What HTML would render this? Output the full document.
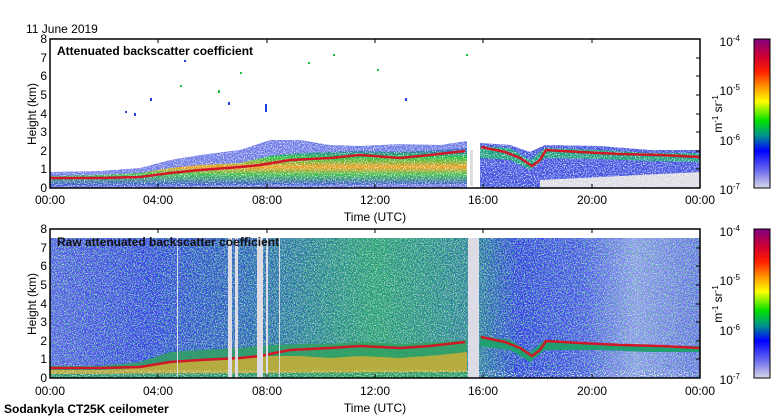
<!DOCTYPE html>
<html><head><meta charset="utf-8"><style>
html,body{margin:0;padding:0;background:#fff;}
svg{display:block;font-family:"Liberation Sans",sans-serif;}
</style></head><body>
<svg width="780" height="420" viewBox="0 0 780 420" xmlns="http://www.w3.org/2000/svg">
<defs>
<filter id="spk" x="0" y="0" width="100%" height="100%">
<feTurbulence type="fractalNoise" baseFrequency="0.9" numOctaves="1" seed="3"/>
<feColorMatrix type="matrix" values="0 0 0 0 1  0 0 0 0 1  0 0 0 0 1  0 0 0 9 -4.8"/>
</filter>
<filter id="spk2" x="0" y="0" width="100%" height="100%">
<feTurbulence type="fractalNoise" baseFrequency="0.7" numOctaves="1" seed="8"/>
<feColorMatrix type="matrix" values="0 0 0 0 0.1  0 0 0 0 0.8  0 0 0 0 0.2  0 0 0 9 -4.9"/>
</filter>
<linearGradient id="lowbg" x1="0" x2="1" y1="0" y2="0">
<stop offset="0" stop-color="#5560e6"/>
<stop offset="0.15" stop-color="#3848e4"/>
<stop offset="0.3" stop-color="#2f62c0"/>
<stop offset="0.5" stop-color="#2c9a7a"/>
<stop offset="0.65" stop-color="#2f7fa0"/>
<stop offset="0.72" stop-color="#3444e2"/>
<stop offset="0.82" stop-color="#4c5ae8"/>
<stop offset="0.9" stop-color="#8c96ee"/>
<stop offset="1" stop-color="#6470e6"/>
</linearGradient>
<linearGradient id="cb" x1="0" x2="0" y1="0" y2="1">
<stop offset="0" stop-color="#800080"/>
<stop offset="0.12" stop-color="#d00030"/>
<stop offset="0.22" stop-color="#ff2000"/>
<stop offset="0.33" stop-color="#ffa000"/>
<stop offset="0.42" stop-color="#ffff00"/>
<stop offset="0.55" stop-color="#00e000"/>
<stop offset="0.65" stop-color="#009090"/>
<stop offset="0.75" stop-color="#0000ff"/>
<stop offset="0.87" stop-color="#6060f0"/>
<stop offset="1" stop-color="#d8d8e8"/>
</linearGradient>
<linearGradient id="upband" x1="0" x2="0" y1="0" y2="1">
<stop offset="0" stop-color="#3050e0"/>
<stop offset="0.25" stop-color="#20c040"/>
<stop offset="0.5" stop-color="#f0a020"/>
<stop offset="0.7" stop-color="#40c050"/>
<stop offset="1" stop-color="#4050e0"/>
</linearGradient>
</defs>

<text x="26" y="33" font-size="12">11 June 2019</text>

<!-- ===== upper panel ===== -->
<g>
<polygon points="50,172 100,171 140,168 170,160 200,155 240,150 270,140 300,140 330,145 360,146 400,144 440,145 467,141 467,188 50,188" fill="#5060e0" opacity="0.8"/>
<polygon points="50,176 100,175 140,173 170,168 200,165 240,163 270,156 300,153 330,152 360,151 400,152 440,150 467,148 467,184 50,186" fill="url(#upband)"/>
<polygon points="480,143 510,145 530,152 545,145 600,146 650,150 700,150 700,188 480,188" fill="#4a5ae0"/>
<polygon points="480,146 510,148 530,160 545,148 600,150 650,153 700,153 700,162 650,161 600,159 545,158 530,170 510,160 480,158" fill="#20a080"/>
<polygon points="540,180 620,176 700,172 700,188 540,188" fill="#dcdce4"/>
<rect x="50" y="140" width="650" height="48" filter="url(#spk)" opacity="0.75"/>
<polyline fill="none" stroke="#d01828" stroke-width="2.5" points="50,178 100,178 140,177 170,173 200,170 240,167 260,165 290,160 330,158 360,155 400,158 430,155 465,151"/>
<polyline fill="none" stroke="#d01828" stroke-width="2.5" points="481,147 505,152 520,158 532,166 540,160 546,150 580,152 620,154 660,155 700,157"/>
<rect x="467" y="140" width="12" height="48" fill="#fff"/>
<rect x="470" y="150" width="3" height="36" fill="#ddd"/>
<g fill="#20c040"><rect x="333" y="54" width="2" height="2"/><rect x="308" y="62" width="2" height="2"/><rect x="180" y="85" width="2" height="2"/><rect x="240" y="72" width="2" height="2"/><rect x="377" y="69" width="2" height="2"/><rect x="466" y="54" width="2" height="2"/><rect x="218" y="90" width="2" height="3"/></g>
<g fill="#2040e0"><rect x="150" y="98" width="2" height="3"/><rect x="184" y="60" width="2" height="2"/><rect x="265" y="104" width="2" height="8"/><rect x="228" y="102" width="2" height="3"/><rect x="134" y="113" width="2" height="3"/><rect x="125" y="111" width="2" height="2"/><rect x="405" y="98" width="2" height="3"/></g>
<rect x="50" y="39" width="650" height="149" fill="none" stroke="#000" stroke-width="1.5"/>
<text x="57" y="55" font-size="12" font-weight="bold">Attenuated backscatter coefficient</text>
</g>

<!-- ===== lower panel ===== -->
<g>
<rect x="50" y="238" width="650" height="140" fill="url(#lowbg)"/>
<rect x="50" y="238" width="650" height="140" filter="url(#spk)" opacity="0.6"/>
<rect x="50" y="238" width="650" height="140" filter="url(#spk2)" opacity="0.6"/>
<polygon points="50,366 100,366 140,362 170,352 200,350 240,348 270,345 300,344 330,344 360,342 400,344 440,342 467,340 467,378 50,378" fill="#30a060" opacity="0.85"/>
<polygon points="50,370 100,370 140,368 170,362 200,360 240,358 270,356 300,356 330,358 360,356 400,358 440,355 467,352 467,372 50,374" fill="#e0b030" opacity="0.75"/>
<rect x="50" y="370" width="650" height="8" filter="url(#spk)" opacity="0.6"/>
<polygon points="480,336 510,340 530,352 545,340 600,344 650,346 700,346 700,352 650,352 600,350 545,350 530,362 510,350 480,346" fill="#20a070"/>
<polyline fill="none" stroke="#d01828" stroke-width="2.5" points="50,368 100,368 140,367 170,362 200,360 240,358 260,356 290,350 330,348 360,346 400,348 430,346 465,342"/>
<polyline fill="none" stroke="#d01828" stroke-width="2.5" points="481,337 505,342 520,348 532,356 540,350 546,341 580,343 620,345 660,346 700,348"/>
<g fill="#dcdce6">
<rect x="228" y="238" width="4" height="140"/><rect x="235" y="238" width="3" height="140"/>
<rect x="257" y="238" width="6" height="140"/><rect x="266" y="238" width="2" height="140"/>
<rect x="177" y="238" width="1" height="140"/><rect x="279" y="238" width="1" height="140"/>
<rect x="468" y="238" width="11" height="140"/>
</g>
<rect x="50" y="229" width="650" height="149" fill="none" stroke="#000" stroke-width="1.5"/>
<text x="57" y="246" font-size="12" font-weight="bold" fill="#111">Raw attenuated backscatter coefficient</text>
</g>

<g font-size="12" text-anchor="end">
<text x="47" y="43">8</text><text x="47" y="62">7</text><text x="47" y="80">6</text><text x="47" y="99">5</text><text x="47" y="118">4</text><text x="47" y="136">3</text><text x="47" y="155">2</text><text x="47" y="173">1</text><text x="47" y="192">0</text>
<text x="47" y="233">8</text><text x="47" y="252">7</text><text x="47" y="270">6</text><text x="47" y="289">5</text><text x="47" y="308">4</text><text x="47" y="326">3</text><text x="47" y="345">2</text><text x="47" y="363">1</text><text x="47" y="382">0</text>
</g>
<g font-size="12" text-anchor="middle">
<text x="50" y="204">00:00</text><text x="158" y="204">04:00</text><text x="267" y="204">08:00</text><text x="375" y="204">12:00</text><text x="483" y="204">16:00</text><text x="592" y="204">20:00</text><text x="700" y="204">00:00</text>
<text x="50" y="395">00:00</text><text x="158" y="395">04:00</text><text x="267" y="395">08:00</text><text x="375" y="395">12:00</text><text x="483" y="395">16:00</text><text x="592" y="395">20:00</text><text x="700" y="395">00:00</text>
<text x="375" y="221">Time (UTC)</text>
<text x="375" y="412">Time (UTC)</text>
</g>
<text transform="translate(36,114) rotate(-90)" font-size="12" text-anchor="middle">Height (km)</text>
<text transform="translate(36,304) rotate(-90)" font-size="12" text-anchor="middle">Height (km)</text>
<g stroke="#000" stroke-width="1">
<path d="M158,39v4M267,39v4M375,39v4M483,39v4M592,39v4M158,188v-4M267,188v-4M375,188v-4M483,188v-4M592,188v-4M700,58h-4M700,76h-4M700,95h-4M700,114h-4M700,132h-4M700,151h-4M700,169h-4"/>
<path d="M158,229v4M267,229v4M375,229v4M483,229v4M592,229v4M158,378v-4M267,378v-4M375,378v-4M483,378v-4M592,378v-4M700,248h-4M700,266h-4M700,285h-4M700,304h-4M700,322h-4M700,341h-4M700,359h-4"/>
</g>
<text x="4" y="413" font-size="12" font-weight="bold">Sodankyla CT25K ceilometer</text>

<g>
<rect x="754" y="39" width="16" height="149" fill="url(#cb)" stroke="#000"/>
<rect x="754" y="229" width="16" height="149" fill="url(#cb)" stroke="#000"/>
<g font-size="12" text-anchor="end">
<text x="740" y="46">10<tspan font-size="8" dy="-5">-4</tspan></text>
<text x="740" y="95">10<tspan font-size="8" dy="-5">-5</tspan></text>
<text x="740" y="145">10<tspan font-size="8" dy="-5">-6</tspan></text>
<text x="740" y="194">10<tspan font-size="8" dy="-5">-7</tspan></text>
<text x="740" y="236">10<tspan font-size="8" dy="-5">-4</tspan></text>
<text x="740" y="285">10<tspan font-size="8" dy="-5">-5</tspan></text>
<text x="740" y="335">10<tspan font-size="8" dy="-5">-6</tspan></text>
<text x="740" y="384">10<tspan font-size="8" dy="-5">-7</tspan></text>
</g>
<text transform="translate(722,114) rotate(-90)" font-size="12" text-anchor="middle">m<tspan font-size="8" dy="-4">-1</tspan><tspan dy="4"> sr</tspan><tspan font-size="8" dy="-4">-1</tspan></text>
<text transform="translate(722,304) rotate(-90)" font-size="12" text-anchor="middle">m<tspan font-size="8" dy="-4">-1</tspan><tspan dy="4"> sr</tspan><tspan font-size="8" dy="-4">-1</tspan></text>
</g>
</svg>
</body></html>
